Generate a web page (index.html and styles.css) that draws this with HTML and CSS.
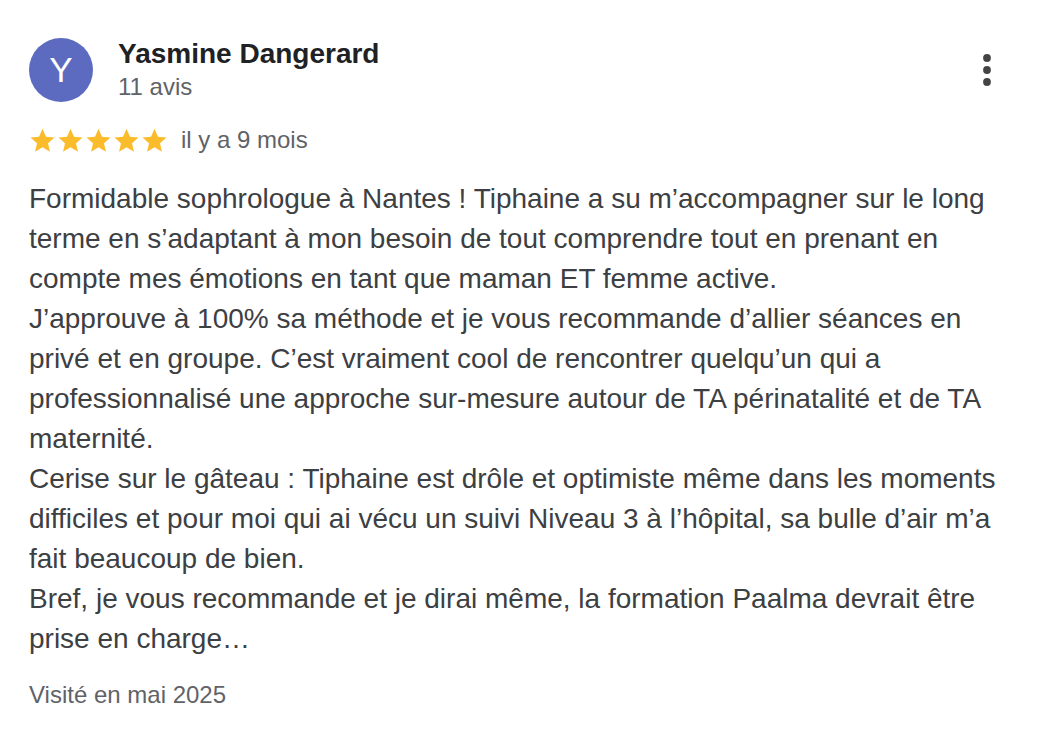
FILE: index.html
```html
<!DOCTYPE html>
<html lang="fr">
<head>
<meta charset="utf-8">
<link rel="stylesheet" href="styles.css">
</head>
<body>
<div class="review">
  <div class="head">
    <div class="avatar">Y</div>
    <div class="who">
      <div class="name">Yasmine Dangerard</div>
      <div class="count">11 avis</div>
    </div>
    <button class="menu" aria-label="Plus">
      <svg width="8" height="32" viewBox="0 0 8 32"><circle cx="4" cy="4" r="3.9"/><circle cx="4" cy="16" r="3.9"/><circle cx="4" cy="28" r="3.9"/></svg>
    </button>
  </div>
  <div class="meta">
    <div class="stars">
      <svg viewBox="0 0 24 24"><path d="M12 1.5l3.1 7.1 7.6.7-5.8 5.1 1.7 7.5L12 18l-6.6 3.9 1.7-7.5L1.3 9.3l7.6-.7z"/></svg>
      <svg viewBox="0 0 24 24"><path d="M12 1.5l3.1 7.1 7.6.7-5.8 5.1 1.7 7.5L12 18l-6.6 3.9 1.7-7.5L1.3 9.3l7.6-.7z"/></svg>
      <svg viewBox="0 0 24 24"><path d="M12 1.5l3.1 7.1 7.6.7-5.8 5.1 1.7 7.5L12 18l-6.6 3.9 1.7-7.5L1.3 9.3l7.6-.7z"/></svg>
      <svg viewBox="0 0 24 24"><path d="M12 1.5l3.1 7.1 7.6.7-5.8 5.1 1.7 7.5L12 18l-6.6 3.9 1.7-7.5L1.3 9.3l7.6-.7z"/></svg>
      <svg viewBox="0 0 24 24"><path d="M12 1.5l3.1 7.1 7.6.7-5.8 5.1 1.7 7.5L12 18l-6.6 3.9 1.7-7.5L1.3 9.3l7.6-.7z"/></svg>
    </div>
    <span class="when">il y a 9 mois</span>
  </div>
  <div class="text">Formidable sophrologue à Nantes ! Tiphaine a su m’accompagner sur le long terme en s’adaptant à mon besoin de tout comprendre tout en prenant en compte mes émotions en tant que maman ET femme active.<br>J’approuve à 100% sa méthode et je vous recommande d’allier séances en privé et en groupe. C’est vraiment cool de rencontrer quelqu’un qui a professionnalisé une approche sur-mesure autour de TA périnatalité et de TA maternité.<br>Cerise sur le gâteau : Tiphaine est drôle et optimiste même dans les moments difficiles et pour moi qui ai vécu un suivi Niveau 3 à l’hôpital, sa bulle d’air m’a fait beaucoup de bien.<br>Bref, je vous recommande et je dirai même, la formation Paalma devrait être prise en charge…</div>
  <div class="visit">Visité en mai 2025</div>
</div>
</body>
</html>
```
FILE: styles.css
```css
html, body {
  margin: 0;
  background: #fff;
}
body {
  font-family: "Liberation Sans", Arial, sans-serif;
}
.review {
  width: 1003px;
  padding: 38px 0 0 29px;
}
.head {
  display: flex;
  align-items: flex-start;
}
.avatar {
  width: 64px;
  height: 64px;
  border-radius: 50%;
  background: #5c6bc0;
  color: #fff;
  font-size: 35px;
  display: flex;
  align-items: center;
  justify-content: center;
  flex: none;
}
.who {
  margin-left: 25px;
  flex: 1;
}
.name {
  font-size: 28px;
  font-weight: bold;
  color: #202124;
  line-height: 32px;
}
.count {
  font-size: 24px;
  color: #5f6368;
  line-height: 34px;
}
.menu {
  border: 0;
  background: none;
  padding: 0;
  margin: 16px 41px 0 0;
  fill: #444;
  display: flex;
}
.meta {
  display: flex;
  align-items: center;
  margin-top: 20px;
  height: 32px;
}
.stars {
  display: flex;
  gap: 1px;
  fill: #fbbc2c;
}
.stars svg {
  width: 27px;
  height: 27px;
}
.when {
  font-size: 24px;
  color: #5f6368;
  margin-left: 13px;
}
.text {
  margin-top: 23px;
  font-size: 28px;
  line-height: 40px;
  color: #3c4043;
  width: 975px;
}
.visit {
  margin-top: 20px;
  font-size: 24px;
  color: #5f6368;
  line-height: 32px;
}
```
